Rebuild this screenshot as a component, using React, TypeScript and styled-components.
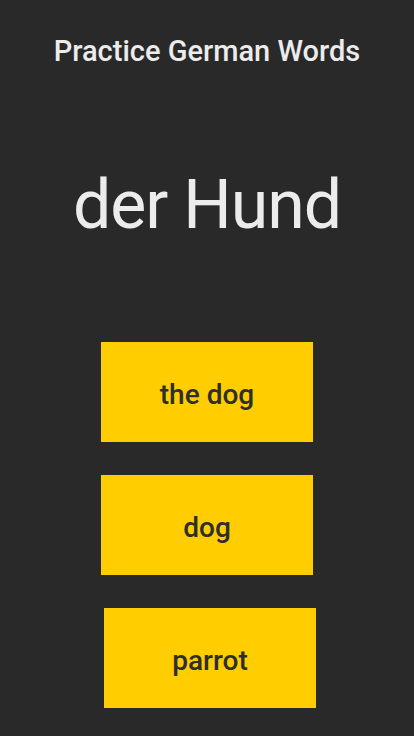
import React from "react";
import styled, { createGlobalStyle } from "styled-components";

const GlobalStyle = createGlobalStyle`
  html, body { margin: 0; padding: 0; background: #292929; }
  body { font-family: Roboto, "DejaVu Sans", "Liberation Sans", sans-serif; }
`;

const Page = styled.div`
  min-height: 736px;
  background: #292929;
  display: flex;
  flex-direction: column;
  align-items: center;
`;

const Title = styled.h1`
  margin: 34px 0 0;
  font-size: 29px;
  line-height: 34px;
  font-weight: 500;
  color: #ececec;
`;

const Word = styled.h2`
  margin: 97px 0 0;
  font-size: 68px;
  line-height: 80px;
  letter-spacing: -1px;
  font-weight: 400;
  color: #ececec;
`;

const Options = styled.div`
  margin-top: 97px;
  display: flex;
  flex-direction: column;
  align-items: center;
  gap: 33px;
`;

const Option = styled.button<{ $shift?: number }>`
  width: 212px;
  height: 100px;
  border: none;
  margin: 0 0 0 ${(p) => (p.$shift ?? 0) * 2}px;
  padding: 4px 0 0;
  background: #ffcd00;
  color: #2e2e2e;
  font-family: inherit;
  font-weight: 500;
  font-size: 28px;
  cursor: pointer;
`;

export default function App() {
  return (
    <Page>
      <GlobalStyle />
      <Title>Practice German Words</Title>
      <Word>der Hund</Word>
      <Options>
        <Option>the dog</Option>
        <Option>dog</Option>
        <Option $shift={3}>parrot</Option>
      </Options>
    </Page>
  );
}
